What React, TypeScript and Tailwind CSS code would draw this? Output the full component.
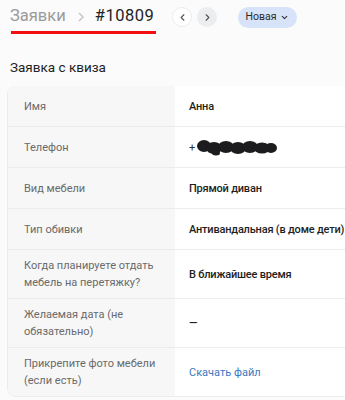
import { ChevronLeft, ChevronRight, ChevronDown } from "lucide-react"

const rows: { label: string; value: string; kind?: string }[] = [
  { label: "Имя", value: "Анна" },
  { label: "Телефон", value: "+", kind: "phone" },
  { label: "Вид мебели", value: "Прямой диван" },
  { label: "Тип обивки", value: "Антивандальная (в доме дети)" },
  { label: "Когда планируете отдать мебель на перетяжку?", value: "В ближайшее время" },
  { label: "Желаемая дата (не обязательно)", value: "—" },
  { label: "Прикрепите фото мебели (если есть)", value: "Скачать файл", kind: "link" },
]

function Scribble() {
  return (
    <svg width="82" height="18" viewBox="0 0 82 18" className="ml-[1px]">
      <g fill="#1c1c1e">
        <ellipse cx="8" cy="8" rx="7" ry="6" />
        <ellipse cx="18" cy="10" rx="8" ry="6" />
        <ellipse cx="30" cy="9" rx="8" ry="6" />
        <ellipse cx="42" cy="10" rx="8" ry="6" />
        <ellipse cx="54" cy="9" rx="8" ry="6" />
        <ellipse cx="66" cy="10" rx="8" ry="5.5" />
        <ellipse cx="75" cy="10" rx="6" ry="5" />
        <ellipse cx="20" cy="15" rx="4" ry="2.5" />
      </g>
    </svg>
  )
}

export default function App() {
  return (
    <div className="w-[345px] h-[400px] overflow-hidden bg-[#fbfbfb] text-[#222] font-['Roboto','Noto_Sans',sans-serif]">
      <div className="flex items-center h-[34px] pl-[10px] pt-[1px]">
        <div className="flex flex-col w-[146px]">
          <div className="flex items-center h-[30px]">
            <span className="text-[16.5px] text-[#9a9a9a]">Заявки</span>
            <svg width="6" height="10" viewBox="0 0 6 10" className="ml-[12px] mr-[11px]">
              <path d="M1 1l4 4-4 4" fill="none" stroke="#c4c4c4" strokeWidth="1.4" />
            </svg>
            <span className="text-[16.5px] text-[#232323] tracking-[0.5px]">#10809</span>
          </div>
          <div className="h-[3px] bg-[#f01010] w-[145px] -mt-[1px] ml-[1px]"></div>
        </div>
        <div className="flex items-center gap-[5px] ml-[16px] -mt-[1px]">
          <div className="w-[20px] h-[20px] rounded-full border border-[#ececec] bg-white flex items-center justify-center">
            <ChevronLeft size={11} strokeWidth={2.5} className="text-[#555]" />
          </div>
          <div className="w-[20px] h-[20px] rounded-full bg-[#ecedef] flex items-center justify-center">
            <ChevronRight size={11} strokeWidth={2.5} className="text-[#555]" />
          </div>
        </div>
        <div className="ml-[21px] -mt-[1px] h-[21px] w-[59px] rounded-full bg-[#d6e3f8] flex items-center justify-center gap-[4px] text-[10.5px] text-[#2a2a2a]">
          <span>Новая</span>
          <ChevronDown size={9} strokeWidth={3} className="text-[#333]" />
        </div>
      </div>

      <div className="pl-[10px] mt-[24px] text-[13.5px] text-[#222] leading-[18px]">Заявка с квиза</div>

      <div className="ml-[8px] mt-[10px] w-[360px] rounded-l-lg overflow-hidden bg-white shadow-[-1px_0_0_#ececec,0_1px_0_#ececec]">
        {rows.map((r, i) => (
          <div key={i} className={"flex min-h-[41px] " + (i < rows.length - 1 ? "border-b border-[#ececec]" : "h-[48px]")}>
            <div className="w-[167px] shrink-0 bg-[#f7f7f7] pl-[16px] pr-[14px] py-[7px] flex items-center text-[11px] leading-[17px] text-[#6a6a6a]">
              {r.label}
            </div>
            <div className="flex-1 bg-white pl-[14px] py-[7px] flex items-center text-[11px] leading-[17px]">
              {r.kind === "phone" ? (
                <span className="flex items-center text-[#333]">+<Scribble /></span>
              ) : r.kind === "link" ? (
                <span className="text-[#3a78c2]">{r.value}</span>
              ) : (
                <span className="text-[#1e1e1e] font-medium tracking-[-0.2px]">{r.value}</span>
              )}
            </div>
          </div>
        ))}
      </div>
    </div>
  )
}
